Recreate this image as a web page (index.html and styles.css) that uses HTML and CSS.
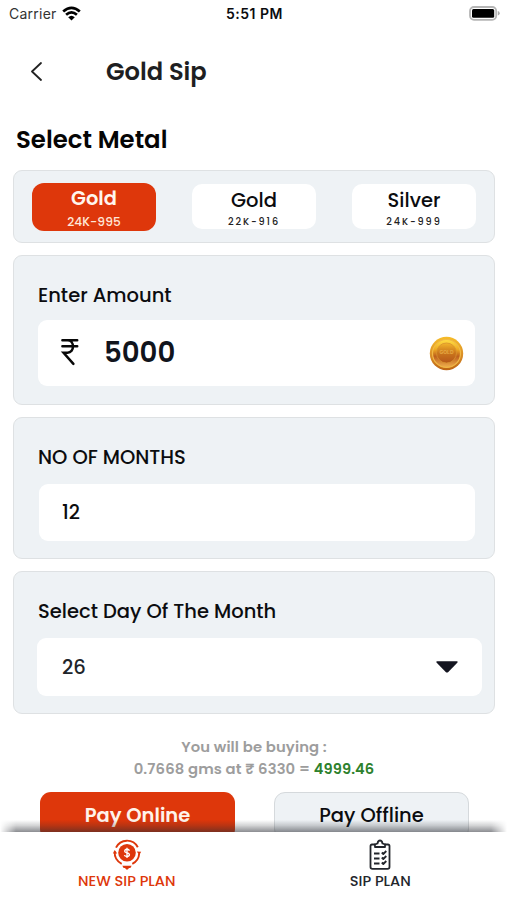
FILE: index.html
```
<!DOCTYPE html>
<html lang="en">
<head>
<meta charset="utf-8">
<title>Gold Sip</title>
<link rel="stylesheet" href="styles.css">
</head>
<body>
<div class="app">
  <div class="status">
    <div class="carrier"><span>Carrier</span>
      <svg width="19" height="15" viewBox="0 0 19 15" fill="none" stroke="#000" stroke-width="2.7"><path d="M1.2 5.6Q9.5-1.9 17.8 5.6M4.1 8.8Q9.5 4 14.9 8.8"/><path d="M6.2 11.2Q9.5 8.2 12.8 11.2L9.5 14.6Z" fill="#000" stroke="none"/></svg>
    </div>
    <span class="clock">5:51 PM</span>
    <svg class="battery" width="32" height="15" viewBox="0 0 32 15"><rect x="1" y="1" width="26.2" height="12.8" rx="4" fill="#fff" stroke="#b5b5b5" stroke-width="1.8"/><rect x="3" y="3" width="22.2" height="8.8" rx="1.5" fill="#000"/><path d="M28.8 5Q30.7 5.6 30.7 7.3T28.8 9.6Z" fill="#aaa"/></svg>
  </div>
  <header class="header">
    <svg width="13" height="19" viewBox="0 0 13 19" fill="none" stroke="#222" stroke-width="1.8" stroke-linecap="round" stroke-linejoin="round"><path d="M11 1 2 9.5 11 18"/></svg>
    <h1>Gold Sip</h1>
  </header>
  <main class="content">
    <h2>Select Metal</h2>
    <section class="card metals">
      <div class="chip active"><b>Gold</b><small>24K-995</small></div>
      <div class="chip"><b>Gold</b><small>22K-916</small></div>
      <div class="chip silver"><b>Silver</b><small>24K-999</small></div>
    </section>
    <section class="card amount">
      <label>Enter Amount</label>
      <div class="field">
        <svg class="rupee" width="19" height="29" viewBox="0 0 19 29" fill="none" stroke="#080808" stroke-width="2.5" stroke-linecap="round"><path d="M2.4 3.2H17.2M2.4 9.2H17.2M3.5 3.2H7.5C14.8 3.2 14.8 15.8 7.5 15.8H3.6L13.4 26.8"/></svg>
        <span class="value">5000</span>
        <svg class="coin" width="35" height="35" viewBox="0 0 35 35">
          <defs>
            <linearGradient id="rim" x1="0" y1="0" x2="0" y2="1"><stop offset="0" stop-color="#f7bd28"/><stop offset=".5" stop-color="#dc9228"/><stop offset="1" stop-color="#bd6414"/></linearGradient>
            <linearGradient id="face" x1="0" y1="0" x2="0" y2="1"><stop offset="0" stop-color="#ffdf45"/><stop offset=".35" stop-color="#efab24"/><stop offset=".6" stop-color="#bd5f1c"/><stop offset="1" stop-color="#f0b04e"/></linearGradient>
            <linearGradient id="core" x1="0" y1="0" x2="0" y2="1"><stop offset="0" stop-color="#f3b52b"/><stop offset=".5" stop-color="#c9751c"/><stop offset="1" stop-color="#b5561a"/></linearGradient>
          </defs>
          <circle cx="17.5" cy="17.5" r="16.7" fill="url(#rim)"/>
          <circle cx="17.5" cy="17.5" r="14" fill="url(#face)" stroke="#f0b845" stroke-width="1.2"/>
          <circle cx="17.5" cy="17" r="10" fill="url(#core)" stroke="#d8922e" stroke-width=".8"/>
          <text x="17.5" y="18.4" class="coin-text">GOLD</text>
        </svg>
      </div>
    </section>
    <section class="card months">
      <label>NO OF MONTHS</label>
      <div class="field"><span>12</span></div>
    </section>
    <section class="card day">
      <label>Select Day Of The Month</label>
      <div class="field"><span>26</span>
        <svg width="24" height="14" viewBox="0 0 24 14"><path d="M2 1.2H22Q23.4 1.4 22.3 2.7L13.3 12Q12 13 10.7 12L1.7 2.7Q.6 1.4 2 1.2" fill="#141520"/></svg>
      </div>
    </section>
    <div class="summary">
      <p>You will be buying :</p>
      <p>0.7668 gms at ₹ 6330 = <b>4999.46</b></p>
    </div>
    <div class="actions">
      <button class="pay online">Pay Online</button>
      <button class="pay offline">Pay Offline</button>
    </div>
  </main>
  <nav class="tabs">
    <div class="tab current">
      <svg width="30" height="32" viewBox="0 0 30 32" fill="none" stroke="#de370b" stroke-width="1.9">
        <circle cx="15" cy="13.8" r="8.8" fill="#de370b" stroke="none"/>
        <path d="M4 8.6A12.2 12.2 0 0 1 25.8 8.2M27.2 14.5A12.2 12.2 0 0 1 20.3 24.8M9.7 24.8A12.2 12.2 0 0 1 2.8 12.5"/>
        <path d="M.9 14.6 2.7 11 5.2 14.4ZM24.8 12.4 29.2 12.8 27.2 16Z" fill="#de370b" stroke="none"/>
        <path d="M10.3 26.7H19.7L18.4 29H17L15.8 30.4H14.2L13 29H11.6Z" fill="#de370b" stroke="none"/>
        <path d="M17.4 11.8Q17 10.3 15 10.3T12.6 12.1Q12.6 13.5 15 13.9T17.4 15.8Q17.3 17.5 15 17.5T12.5 16M15 8.8V19" stroke="#fff" stroke-width="1.4"/>
      </svg>
      <span>NEW SIP PLAN</span>
    </div>
    <div class="tab">
      <svg width="22" height="32" viewBox="0 0 22 32" fill="none" stroke="#23262c" stroke-width="1.8" stroke-linejoin="round">
        <path d="M6 5.5H3Q1.5 5.5 1.5 7V28Q1.5 29.8 3.5 29.8H18.5Q20.5 29.8 20.5 28V7Q20.5 5.5 19 5.5H16"/>
        <path d="M6 8V5.3L8.5 4.5Q9 1.5 11 1.5T13.5 4.5L16 5.3V8Z"/>
        <path d="M5 14.5H10.5M5 19.5H10.5M5 24.5H10.5M12.8 13.5 14.3 15 17.3 12M12.8 18.5 14.3 20 17.3 17M12.8 23.5 14.3 25 17.3 22"/>
      </svg>
      <span>SIP PLAN</span>
    </div>
  </nav>
</div>
</body>
</html>
```
FILE: styles.css
```
* { box-sizing: border-box; margin: 0; padding: 0; }
body { font-family: Poppins, Inter, sans-serif; font-weight: 500; color: #0b0c0f; background: #fff; }
svg { display: block; flex: none; }

.app { width: 507px; height: 900px; display: flex; flex-direction: column; overflow: hidden; }

.status { height: 28px; display: grid; grid-template-columns: 1fr auto 1fr; align-items: center; padding: 0 6px 0 9px; font-family: Inter, sans-serif; font-size: 14px; line-height: 28px; }
.carrier { display: flex; gap: 5px; align-items: center; font-weight: 400; letter-spacing: .25px; color: #333; }
.carrier svg { margin-top: -2px; }
.clock { margin-left: -1px; font-weight: 600; letter-spacing: .5px; }
.battery { justify-self: end; margin-top: -2px; }

.header { height: 87px; display: flex; align-items: center; padding-left: 30px; }
h1 { margin: 1px 0 0 63px; font-size: 24.2px; line-height: 30px; font-weight: 600; color: #1e1f22; }

.content { flex: 1; min-height: 0; overflow: hidden; padding: 10px 12px 0 13px; }
h2 { margin-left: 3px; font-size: 24.4px; line-height: 30px; font-weight: 600; color: #050505; }

.card { border: 1px solid #dee1e3; border-radius: 9px; background: #eef2f5; margin-bottom: 12px; }
.metals { height: 73px; margin-top: 15px; display: flex; gap: 36px; align-items: center; padding: 0 18px; }
.chip { width: 124px; height: 45px; border-radius: 10px; background: #fff; display: flex; flex-direction: column; align-items: center; padding-top: 6px; }
.chip b { font-size: 19.5px; line-height: 22px; font-weight: 500; }
.chip small { font-size: 9.7px; line-height: 20px; letter-spacing: 1.9px; color: #222; }
.chip.active { height: 48px; border-radius: 12px; background: #de370b; color: #fff6ee; padding-top: 5px; }
.chip.active b { font-size: 19.4px; font-weight: 600; }
.chip.active small { font-size: 12.2px; line-height: 24px; letter-spacing: .1px; color: #ffe6d8; }

label { display: block; margin-left: 24px; font-size: 19.5px; line-height: 24px; }
.field { background: #fff; border-radius: 9px; display: flex; align-items: center; }
.amount { height: 150px; padding-top: 28px; }
.amount .field { height: 66px; margin: 12px 19px 0 24px; padding: 0 11px 0 22px; }
.rupee { margin-top: -3px; }
.value { flex: 1; margin-left: 25px; font-size: 27.6px; line-height: 36px; font-weight: 600; color: #11141c; }
.coin-text { font: 700 5px Inter, sans-serif; text-anchor: middle; fill: #e5a843; }

.months { height: 142px; padding-top: 28px; }
.months .field { height: 57px; margin: 14px 19px 0 25px; padding: 0 23px 1px; font-size: 19.4px; }

.day { height: 143px; padding-top: 28px; }
.day .field { height: 58px; margin: 14px 12px 0 23px; padding: 0 23px 0 25px; justify-content: space-between; font-size: 19.6px; color: #20242a; }

.summary { margin: 22px 0 0; text-align: center; font-size: 14.8px; line-height: 22px; font-weight: 600; letter-spacing: .12px; color: #9d9d9d; }
.summary b { font-size: 14.6px; font-weight: 600; color: #2d812d; }

.actions { display: flex; gap: 39px; margin: 12px 14px 0 27px; }
.pay { font-family: inherit; width: 195px; height: 48px; border-radius: 11px; font-size: 19.5px; line-height: 46px; color: #0b0c0f; }
.online { border: 0; background: #de370b; color: #fff3ea; font-weight: 600; }
.offline { border: 1px solid #d5d9dc; background: #eef2f5; font-weight: 500; }

.tabs { position: relative; height: 68px; display: grid; grid-template-columns: 1fr 1fr; background: #fff; }
.tabs::before { content: ""; position: absolute; left: 0; right: 0; bottom: 100%; height: 12px; background: linear-gradient(to bottom, rgba(40, 43, 50, 0), rgba(40, 43, 50, .2) 45%, rgba(40, 43, 50, .54)); -webkit-mask-image: linear-gradient(to right, transparent, #000 16px, #000 calc(100% - 16px), transparent); mask-image: linear-gradient(to right, transparent, #000 16px, #000 calc(100% - 16px), transparent); }
.tab { display: flex; flex-direction: column; align-items: center; padding-top: 7px; font-size: 14.6px; line-height: 20px; color: #23262c; }
.tab.current { color: #de370b; }
```
